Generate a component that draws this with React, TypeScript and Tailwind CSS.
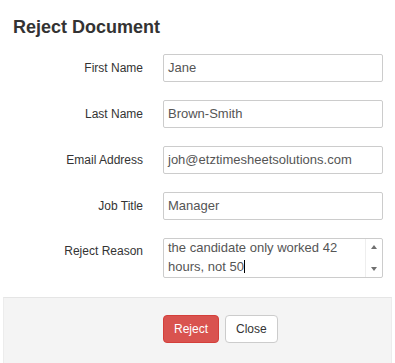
import React from "react";

const fields = [
  { label: "First Name", value: "Jane" },
  { label: "Last Name", value: "Brown-Smith" },
  { label: "Email Address", value: "joh@etztimesheetsolutions.com" },
  { label: "Job Title", value: "Manager" },
];

export default function App() {
  return (
    <div className="w-[395px] h-[363px] bg-white flex flex-col font-['Liberation_Sans',Arial,sans-serif] text-[#333] overflow-hidden">
      <h1 className="pl-[13px] pt-[17px] text-[18px] leading-[20px] font-bold text-[#333]">
        Reject Document
      </h1>

      <div className="flex flex-col gap-[18px] mt-[17px]">
        {fields.map((f) => (
          <div key={f.label} className="flex items-center gap-[20px]">
            <div className="w-[143px] text-right text-[12px] leading-[14px]">{f.label}</div>
            <div className="w-[220px] h-[28px] border border-[#ccc] rounded-[2px] px-[4px] flex items-center text-[13px] text-[#555] bg-white">
              {f.value}
            </div>
          </div>
        ))}

        <div className="flex items-start gap-[20px]">
          <div className="w-[143px] text-right text-[12px] leading-[14px] pt-[6px]">Reject Reason</div>
          <div className="w-[220px] h-[40px] border border-[#ccc] rounded-[2px] flex overflow-hidden bg-white">
            <div className="flex-1 pl-[4px] pr-[2px] text-[13px] leading-[19px] text-[#555] -mt-[1px]">
              the candidate only worked 42
              <br />
              hours, not 50
              <span className="inline-block w-[1px] h-[13px] bg-black align-[-2px]" />
            </div>
            <div className="w-[17px] border-l border-[#eee] flex flex-col items-center justify-between py-[6px]">
              <svg width="6" height="4" viewBox="0 0 6 4">
                <path d="M0 4 L3 0 L6 4 Z" fill="#707070" />
              </svg>
              <svg width="6" height="4" viewBox="0 0 6 4">
                <path d="M0 0 L3 4 L6 0 Z" fill="#707070" />
              </svg>
            </div>
          </div>
        </div>
      </div>

      <div className="mt-[19px] mx-[3px] flex-1 bg-[#f4f4f4] border-t border-[#e5e5e5] border-l border-r border-l-[#ececec] border-r-[#ececec] pt-[17px] pl-[159px] flex gap-[6px] items-start">
        <button className="h-[28px] px-[10px] rounded-[4px] bg-[#d9534f] border border-[#d43f3a] text-white text-[12px]">
          Reject
        </button>
        <button className="h-[28px] px-[10px] rounded-[4px] bg-white border border-[#ccc] text-[#333] text-[12px]">
          Close
        </button>
      </div>
    </div>
  );
}
